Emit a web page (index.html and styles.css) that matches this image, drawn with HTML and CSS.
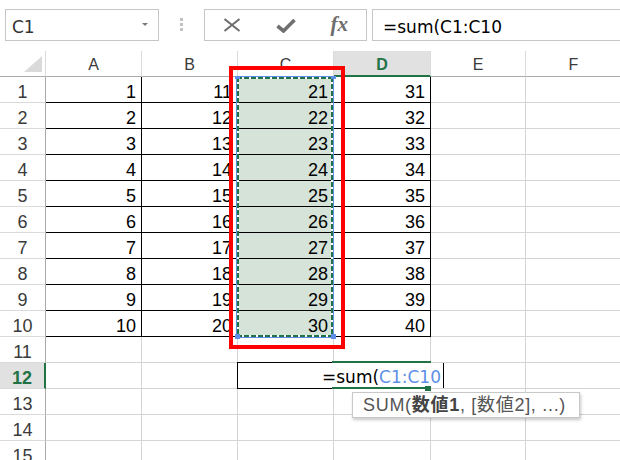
FILE: index.html
```html
<!DOCTYPE html>
<html lang="ja">
<head>
<meta charset="utf-8">
<title>Excel SUM</title>
<link rel="stylesheet" href="styles.css">
</head>
<body>
<div class="app">
  <div class="fbar">
    <div class="namebox"><span>C1</span><span class="caret"></span></div>
    <div class="dots"><i></i><i></i><i></i></div>
    <div class="btns">
      <span class="slot"><svg width="18" height="14" viewBox="0 0 18 14"><path d="M1.5 1 L16.5 13 M16.5 1 L1.5 13" stroke="#6d6d6d" stroke-width="2" fill="none"/></svg></span>
      <span class="slot"><svg width="20" height="15" viewBox="0 0 20 15"><path d="M1.5 8 L7.5 13 L18.5 2" stroke="#707070" stroke-width="3.6" fill="none" stroke-linejoin="miter"/></svg></span>
      <span class="slot"><i class="fx">fx</i></span>
    </div>
    <div class="finput">=sum(C1:C10</div>
  </div>
  <div class="sheet">
    <div class="grid">
      <div class="corner"><span class="tri"></span></div><div class="ch">A</div><div class="ch">B</div><div class="ch">C</div><div class="ch on">D</div><div class="ch">E</div><div class="ch">F</div>

      <div class="rh">1</div><div class="c t">1</div><div class="c t">11</div><div class="c t sel">21</div><div class="c t">31</div><div class="c"></div><div class="c"></div>
      <div class="rh">2</div><div class="c t">2</div><div class="c t">12</div><div class="c t sel">22</div><div class="c t">32</div><div class="c"></div><div class="c"></div>
      <div class="rh">3</div><div class="c t">3</div><div class="c t">13</div><div class="c t sel">23</div><div class="c t">33</div><div class="c"></div><div class="c"></div>
      <div class="rh">4</div><div class="c t">4</div><div class="c t">14</div><div class="c t sel">24</div><div class="c t">34</div><div class="c"></div><div class="c"></div>
      <div class="rh">5</div><div class="c t">5</div><div class="c t">15</div><div class="c t sel">25</div><div class="c t">35</div><div class="c"></div><div class="c"></div>
      <div class="rh">6</div><div class="c t">6</div><div class="c t">16</div><div class="c t sel">26</div><div class="c t">36</div><div class="c"></div><div class="c"></div>
      <div class="rh">7</div><div class="c t">7</div><div class="c t">17</div><div class="c t sel">27</div><div class="c t">37</div><div class="c"></div><div class="c"></div>
      <div class="rh">8</div><div class="c t">8</div><div class="c t">18</div><div class="c t sel">28</div><div class="c t">38</div><div class="c"></div><div class="c"></div>
      <div class="rh">9</div><div class="c t">9</div><div class="c t">19</div><div class="c t sel">29</div><div class="c t">39</div><div class="c"></div><div class="c"></div>
      <div class="rh">10</div><div class="c t">10</div><div class="c t">20</div><div class="c t sel">30</div><div class="c t">40</div><div class="c"></div><div class="c"></div>
      <div class="rh">11</div><div class="c"></div><div class="c"></div><div class="c"></div><div class="c"></div><div class="c"></div><div class="c"></div>
      <div class="rh on">12</div><div class="c"></div><div class="c"></div><div class="c"></div><div class="c"></div><div class="c"></div><div class="c"></div>
      <div class="rh">13</div><div class="c"></div><div class="c"></div><div class="c"></div><div class="c"></div><div class="c"></div><div class="c"></div>
      <div class="rh">14</div><div class="c"></div><div class="c"></div><div class="c"></div><div class="c"></div><div class="c"></div><div class="c"></div>
      <div class="rh">15</div><div class="c"></div><div class="c"></div><div class="c"></div><div class="c"></div><div class="c"></div><div class="c"></div>
    </div>

    <div class="range">
      <div class="ants"></div>
      <span class="hd tl"></span><span class="hd tr"></span><span class="hd bl"></span><span class="hd br"></span>
    </div>
    <div class="redframe"></div>

    <div class="editframe"></div>
    <div class="editor"><span class="fx-black">=sum(</span><span class="ref">C1:C10</span></div>
    <div class="active"></div>
    <div class="fillhandle"></div>

    <div class="tip">SUM(<b>数値1</b>, [数値2], ...)</div>
  </div>
</div>
</body>
</html>
```
FILE: styles.css
```css
html, body {
  margin: 0;
  padding: 0;
  background: #fff;
}
.app {
  width: 620px;
  height: 460px;
  overflow: hidden;
  position: relative;
  font-family: "Liberation Sans", Arial, sans-serif;
}

/* formula bar */
.fbar {
  height: 51px;
  box-sizing: border-box;
  padding: 9px 0 0 5px;
  display: flex;
  align-items: flex-start;
}
.namebox {
  width: 154px;
  height: 32px;
  box-sizing: border-box;
  border: 1px solid #c6c6c6;
  display: flex;
  align-items: flex-start;
  padding: 3px 0 0 6px;
  font-family: "DejaVu Sans", sans-serif;
  font-size: 17px;
  line-height: 28px;
  color: #333;
}
.caret {
  margin-left: auto;
  margin-right: 10px;
  margin-top: 10px;
  width: 0;
  height: 0;
  border-left: 3px solid transparent;
  border-right: 3px solid transparent;
  border-top: 3px solid #7a7a7a;
}
.dots {
  margin: 9px 0 0 21px;
  width: 3px;
  display: flex;
  flex-direction: column;
  gap: 2px;
}
.dots i {
  display: block;
  width: 3px;
  height: 3px;
  background: #c2c2c2;
}
.btns {
  margin-left: 21px;
  width: 163px;
  height: 32px;
  box-sizing: border-box;
  border: 1px solid #c6c6c6;
  display: flex;
  align-items: center;
}
.slot {
  width: 54px;
  height: 30px;
  display: flex;
  align-items: center;
  justify-content: center;
}
.fx {
  font-family: "Liberation Serif", serif;
  font-style: italic;
  font-weight: bold;
  font-size: 21px;
  color: #6d6d6d;
  line-height: 1;
  margin-top: -2px;
}
.finput {
  margin-left: 5px;
  flex: 1;
  height: 32px;
  box-sizing: border-box;
  border: 1px solid #c6c6c6;
  border-right: none;
  padding: 3px 0 0 10px;
  font-family: "DejaVu Sans", sans-serif;
  font-size: 17px;
  line-height: 28px;
  color: #000;
}

/* sheet */
.sheet {
  position: relative;
  height: 409px;
  overflow: hidden;
}
.grid {
  display: grid;
  grid-template-columns: 46px 96px 96px 96px 97px 95px 96px;
  grid-auto-rows: 26px;
  width: 622px;
}
.grid > div {
  box-sizing: border-box;
}
.corner {
  border-right: 1px solid #dadada;
  border-bottom: 1px solid #ababab;
  display: flex;
  justify-content: flex-end;
  align-items: flex-end;
  padding: 0 3px 4px 0;
}
.tri {
  width: 18px;
  height: 16px;
  background: #dadada;
  clip-path: polygon(100% 0, 100% 100%, 0 100%);
}
.ch {
  border-right: 1px solid #dadada;
  border-bottom: 1px solid #ababab;
  text-align: center;
  font-size: 16px;
  line-height: 25px;
  padding-top: 1px;
  color: #3a3a3a;
}
.ch.on {
  background: #e1e1e1;
  border-bottom: 2px solid #217346;
  color: #217346;
  font-weight: bold;
}
.rh {
  border-right: 1px solid #ababab;
  border-bottom: 1px solid #dadada;
  text-align: center;
  font-size: 18px;
  line-height: 19px;
  padding-top: 6px;
  color: #3a3a3a;
}
.rh.on {
  background: #e1e1e1;
  border-right: 2px solid #217346;
  color: #217346;
  font-weight: bold;
}
.c {
  border-right: 1px solid #d4d4d4;
  border-bottom: 1px solid #d4d4d4;
  text-align: right;
  font-size: 18px;
  line-height: 19px;
  padding: 6px 5px 0 0;
  color: #000;
}
.c.t {
  border-right-color: #000;
  border-bottom-color: #000;
}
.c.sel {
  background: #d5e3d8;
}

/* referenced range (marching ants) */
.range {
  position: absolute;
  left: 236px;
  top: 25px;
  width: 98px;
  height: 262px;
  box-sizing: border-box;
  border: 1px solid #5f8fe6;
}
.ants {
  position: absolute;
  inset: 0;
  background:
    repeating-linear-gradient(90deg, #217346 0 5px, #fff 5px 7px) top left / 100% 2px no-repeat,
    repeating-linear-gradient(90deg, #217346 0 5px, #fff 5px 7px) bottom left / 100% 2px no-repeat,
    repeating-linear-gradient(180deg, #217346 0 5px, #fff 5px 7px) top left / 2px 100% no-repeat,
    repeating-linear-gradient(180deg, #217346 0 5px, #fff 5px 7px) top right / 2px 100% no-repeat;
}
.hd {
  position: absolute;
  width: 5px;
  height: 5px;
  background: #5f8fe6;
}
.hd.tl { left: -2px; top: -1px; height: 3px; }
.hd.tr { right: -3px; top: -1px; height: 3px; }
.hd.bl { left: -2px; bottom: -2px; }
.hd.br { right: -3px; bottom: -2px; }

.redframe {
  position: absolute;
  left: 229px;
  top: 15px;
  width: 116px;
  height: 283px;
  box-sizing: border-box;
  border: 4px solid #ff0000;
}

/* in-cell editor */
.editframe {
  position: absolute;
  left: 237px;
  top: 311px;
  width: 97px;
  height: 27px;
  box-sizing: border-box;
  border: 1px solid #000;
  border-right: none;
  background: #fff;
}
.editor {
  position: absolute;
  left: 238px;
  top: 312px;
  width: 206px;
  height: 25px;
  box-sizing: border-box;
  background: #fff;
  border-right: 1px solid #000;
  text-align: right;
  padding: 3px 2px 0 0;
  font-family: "DejaVu Sans", sans-serif;
  font-size: 17px;
  line-height: 22px;
  white-space: nowrap;
  color: #000;
}
.ref {
  color: #5f8fe6;
}
.active {
  position: absolute;
  left: 332px;
  top: 310px;
  width: 99px;
  height: 28px;
  box-sizing: border-box;
  border-top: 2px solid #217346;
  border-bottom: 2px solid #217346;
}
.fillhandle {
  position: absolute;
  left: 425px;
  top: 335px;
  width: 6px;
  height: 5px;
  background: #217346;
}

/* tooltip */
.tip {
  position: absolute;
  left: 352px;
  top: 341px;
  width: 228px;
  height: 26px;
  box-sizing: border-box;
  border: 1px solid #c8c8c8;
  background: #fff;
  box-shadow: 1px 2px 3px rgba(0, 0, 0, 0.22);
  padding-left: 10px;
  font-family: "Liberation Sans", "Noto Sans CJK JP", sans-serif;
  font-size: 18px;
  letter-spacing: 0.7px;
  line-height: 24px;
  color: #555;
  white-space: nowrap;
}
.tip b {
  color: #444;
}
```
